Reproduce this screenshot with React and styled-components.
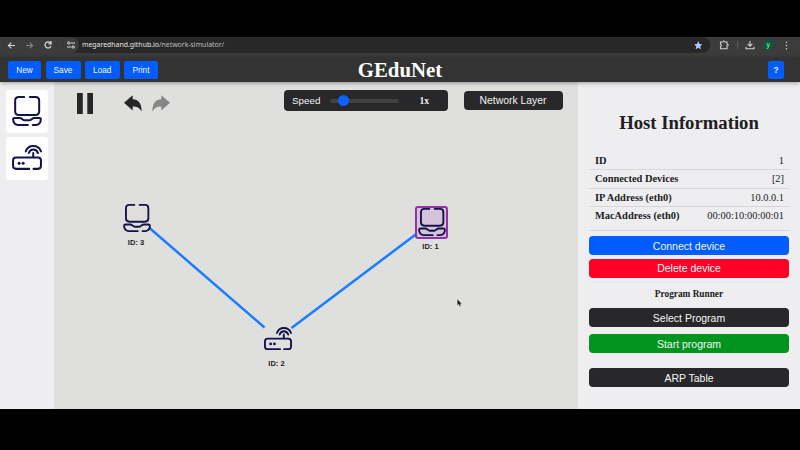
import React from "react";
import styled, { createGlobalStyle } from "styled-components";

const GlobalStyle = createGlobalStyle`
  * { box-sizing: border-box; }
  body { margin: 0; background: #000; }
`;

const Screen = styled.div`
  width: 800px;
  height: 450px;
  padding-top: 37px;
  background: #000;
  overflow: hidden;
  font-family: "Liberation Sans", Arial, sans-serif;
`;

const BrowserBar = styled.div`
  height: 20px;
  background: #3c3c3c;
  display: flex;
  align-items: flex-start;
`;

const NavIcons = styled.div`
  width: 63px;
  height: 16px;
  padding-left: 7px;
  display: flex;
  align-items: center;
  gap: 9px;
`;

const AddressBar = styled.div`
  width: 647px;
  height: 16px;
  background: #282828;
  border-radius: 8px;
  display: flex;
  align-items: center;
  padding-right: 8px;
`;

const SiteBadge = styled.div`
  width: 16px;
  height: 16px;
  border-radius: 50%;
  background: #3c3c3c;
  display: flex;
  align-items: center;
  justify-content: center;
`;

const Url = styled.span`
  flex: 1;
  margin-left: 3px;
  font: 6.92px/16px "Noto Sans", sans-serif;
  color: #bdbdbd;
  b { font-weight: 400; color: #e4e4e4; }
`;

const Extensions = styled.div`
  flex: 1;
  height: 16px;
  display: flex;
  align-items: center;
  padding-left: 9px;
`;

const Divider = styled.i`
  width: 1px;
  height: 8px;
  background: #5c5c5c;
  margin: 0 7px;
`;

const Avatar = styled.div`
  width: 10px;
  height: 10px;
  margin: 0 12px 0 8px;
  border-radius: 50%;
  background: #075c3b;
  color: #d5e6dd;
  font-size: 6.5px;
  line-height: 9px;
  text-align: center;
`;

const Header = styled.header`
  height: 25px;
  background: #333;
  display: grid;
  grid-template-columns: 1fr auto 1fr;
  align-items: center;
  padding: 0 16px 0 8px;
  box-shadow: 0 1px 4px rgba(0, 0, 0, 0.35);
  position: relative;
  z-index: 1;
`;

const Title = styled.h1`
  margin: 0 0 0 8px;
  font: bold 20.8px/24px "Liberation Serif", serif;
  color: #fff;
`;

const Menu = styled.div`
  display: flex;
  gap: 4.5px;
`;

const MenuButton = styled.button`
  width: ${(p) => p.$w}px;
  height: 18px;
  padding: 0;
  border: 0;
  border-radius: 2px;
  background: #005cff;
  color: #f2f6ff;
  font: ${(p) => (p.$bold ? "bold " : "")}8.3px "Liberation Sans", sans-serif;
  justify-self: end;
`;

const Main = styled.main`
  height: 327px;
  display: grid;
  grid-template-columns: 54px 524px 222px;
`;

const Palette = styled.aside`
  background: #eeeef0;
  padding: 8px 6px;
  display: flex;
  flex-direction: column;
  gap: 4px;
`;

const PaletteTile = styled.button`
  width: 42px;
  height: 43px;
  padding: 0 0 2px;
  border: 0;
  border-radius: 3px;
  background: #fff;
  display: flex;
  align-items: center;
  justify-content: center;
`;

const Workspace = styled.section`
  position: relative;
  background: #dfdfde;
`;

const Toolbar = styled.div`
  display: flex;
  align-items: flex-start;
  padding: 8px 0 0 23px;
`;

const History = styled.div`
  display: flex;
  gap: 10px;
  margin: 5px 0 0 31px;
`;

const SpeedBox = styled.div`
  width: 164px;
  height: 21px;
  margin-left: 114px;
  border-radius: 4px;
  background: #28282a;
  color: #f2f2f2;
  display: flex;
  align-items: center;
  padding: 0 19px 0 8px;
  font-size: 9.8px;
`;

const Track = styled.div`
  width: 69px;
  height: 4px;
  margin-left: 10px;
  border-radius: 2px;
  background: #414142;
  display: flex;
  align-items: center;
`;

const Thumb = styled.i`
  width: 11px;
  height: 11px;
  margin-left: 8px;
  border-radius: 50%;
  background: #0a62ff;
`;

const SpeedValue = styled.b`
  margin-left: auto;
  font: bold 9.5px "Liberation Serif", serif;
`;

const LayerButton = styled.button`
  width: 99px;
  height: 19px;
  margin: 1px 0 0 15.5px;
  padding: 0 0 1px;
  border: 0;
  border-radius: 4px;
  background: #28282a;
  color: #f2f2f2;
  font: 10.4px "Liberation Sans", sans-serif;
`;

const Links = styled.svg`
  position: absolute;
  inset: 0;
  pointer-events: none;
`;

const Node = styled.div`
  position: absolute;
  left: ${(p) => p.$x}px;
  top: ${(p) => p.$y}px;
  width: 33px;
  display: flex;
  flex-direction: column;
  align-items: center;
`;

const NodeFrame = styled.div`
  width: 33px;
  height: 33px;
  border-radius: 3px;
  border: 2px solid ${(p) => (p.$selected ? "#9331a8" : "transparent")};
  background: ${(p) => (p.$selected ? "#d5c3d9" : "transparent")};
  display: flex;
  align-items: center;
  justify-content: center;
`;

const NodeLabel = styled.span`
  margin: 3.5px 2px 0 0;
  font: bold 7.5px/9px "Liberation Sans", sans-serif;
  color: #1c1c1c;
  white-space: nowrap;
`;

const Pointer = styled.svg`
  position: absolute;
  left: 403px;
  top: 217px;
`;

const Info = styled.aside`
  background: #eeeef0;
  color: #202022;
  padding: 29px 11px 0;
  display: flex;
  flex-direction: column;
`;

const InfoTitle = styled.h2`
  margin: 0 0 16px;
  font: bold 18.7px/24px "Liberation Serif", serif;
  text-align: center;
`;

const InfoList = styled.div`
  height: 79.5px;
  border-bottom: 1px solid #d8d8da;
`;

const InfoRow = styled.div`
  height: 18.4px;
  padding: 0 5px 0 6px;
  display: flex;
  justify-content: space-between;
  font: 10.4px/19px "Liberation Serif", serif;
  & + & { border-top: 1px solid #d8d8da; line-height: 18px; }
`;

const ActionButton = styled.button`
  width: 200px;
  height: 19px;
  margin-top: ${(p) => p.$gap}px;
  padding: 0;
  border: 0;
  border-radius: 4px;
  background: ${(p) => p.$color};
  color: #f5f5f5;
  font: 10.5px "Liberation Sans", sans-serif;
  flex: none;
`;

const RunnerTitle = styled.h3`
  margin: 4px 0 0;
  padding-top: 5px;
  border-top: 1px solid #e5e5e8;
  font: bold 9.3px/12px "Liberation Serif", serif;
  text-align: center;
`;

const INK = "#14124a";

const ComputerIcon = ({ size }) => (
  <svg width={size} height={size} viewBox="0 0 89 90" fill="none" stroke={INK} strokeWidth="6" strokeLinecap="round" strokeLinejoin="round">
    <path d="M36 3H20Q9 3 9 14V46Q9 57 20 57H70Q81 57 81 46V14Q81 3 70 3H53" />
    <path d="M47 87H17Q3 85 3 70Q3 66 8 66H22C31 66 30 73 38 73H51C59 73 58 66 67 66H81Q86 66 86 70Q86 85 72 87H62" />
  </svg>
);

const RouterIcon = ({ size }) => (
  <svg width={size} height={size * 0.83} viewBox="0 0 89 74" fill="none" stroke={INK} strokeWidth="6" strokeLinecap="round" strokeLinejoin="round">
    <path d="M51 71H12Q3 71 3 62V46Q3 37 12 37H77Q86 37 86 46V62Q86 71 77 71H64M63 36V24" />
    <path d="M41 19C48-2 78-2 86 19M50 24C54 10 72 10 77 24" />
    <circle cx="21" cy="54" r="4.5" fill={INK} stroke="none" />
    <circle cx="33" cy="54" r="4.5" fill={INK} stroke="none" />
  </svg>
);

const BackArrow = ({ color, flip }) => (
  <svg width="18" height="17" viewBox="0 0 54 50">
    <path transform={flip ? "translate(54 0) scale(-1 1)" : undefined} fill={color} d="M0 23L26 0V12C43 12 53 24 53 49C46 37 39 34 26 34V46Z" />
  </svg>
);

const NavArrow = ({ color, flip }) => (
  <svg width="9" height="9" viewBox="0 0 9 9" fill="none" stroke={color} strokeWidth="1.1">
    <path d={flip ? "M1 4.5H7.5M4.7 1.6L7.6 4.5L4.7 7.4" : "M8 4.5H1.5M4.3 1.6L1.4 4.5L4.3 7.4"} />
  </svg>
);

const devices = [
  { id: 3, x: 66.5, y: 119, Icon: ComputerIcon },
  { id: 1, x: 361, y: 123.5, Icon: ComputerIcon, selected: true },
  { id: 2, x: 207, y: 240, Icon: RouterIcon },
];

const details = [
  ["ID", "1"],
  ["Connected Devices", "[2]"],
  ["IP Address (eth0)", "10.0.0.1"],
  ["MacAddress (eth0)", "00:00:10:00:00:01"],
];

export default function App() {
  return (
    <Screen>
      <GlobalStyle />
      <BrowserBar>
        <NavIcons>
          <NavArrow color="#dadada" />
          <NavArrow color="#858585" flip />
          <svg width="10" height="10" viewBox="0 0 10 10" fill="none" stroke="#dadada" strokeWidth="1.2">
            <path d="M8 6A3.1 3.1 0 1 1 7.5 2.9M8.1 1V3.8H5.4" />
          </svg>
        </NavIcons>
        <AddressBar>
          <SiteBadge>
            <svg width="8" height="8" viewBox="0 0 8 8" fill="none" stroke="#dadada">
              <path d="M3.8 2H8M0 6H4.2" />
              <circle cx="1.8" cy="2" r="1.2" />
              <circle cx="6.2" cy="6" r="1.2" />
            </svg>
          </SiteBadge>
          <Url><b>megaredhand.github.io</b>/network-simulator/</Url>
          <svg width="8.5" height="8.5" viewBox="0 0 20 20">
            <path fill="#a8c7fa" d="M10 0L13 7L20 7.6L14.7 12.3L16.3 20L10 15.8L3.7 20L5.3 12.3L0 7.6L7 7Z" />
          </svg>
        </AddressBar>
        <Extensions>
          <svg width="11" height="10" viewBox="0 0 11 10" fill="none" stroke="#cfcfcf" strokeWidth="1.1">
            <path d="M1.5 2H3.7Q4.8 0 6 2H8V4.2Q10.5 5 8 6.3V8.8H1.5V6.5Q3.5 5.3 1.5 4.2Z" />
          </svg>
          <Divider />
          <svg width="10" height="10" viewBox="0 0 10 10" fill="none" stroke="#cfcfcf" strokeWidth="1.1">
            <path d="M5 1V6M2.7 3.8L5 6.1L7.3 3.8M1 6.8V8.7H9V6.8" />
          </svg>
          <Avatar>y</Avatar>
          <svg width="3" height="9" viewBox="0 0 3 9" fill="#cfcfcf">
            <circle cx="1.5" cy="1.2" r=".8" />
            <circle cx="1.5" cy="4.5" r=".8" />
            <circle cx="1.5" cy="7.8" r=".8" />
          </svg>
        </Extensions>
      </BrowserBar>
      <Header>
        <Menu>
          <MenuButton $w={33}>New</MenuButton>
          <MenuButton $w={35}>Save</MenuButton>
          <MenuButton $w={34.5}>Load</MenuButton>
          <MenuButton $w={34}>Print</MenuButton>
        </Menu>
        <Title>GEduNet</Title>
        <MenuButton $w={16} $bold>?</MenuButton>
      </Header>
      <Main>
        <Palette>
          <PaletteTile><ComputerIcon size={30} /></PaletteTile>
          <PaletteTile><RouterIcon size={30} /></PaletteTile>
        </Palette>
        <Workspace>
          <Toolbar>
            <svg width="16" height="26" viewBox="0 0 16 26" fill="#262626">
              <path d="M0 3H5.8V24H0ZM10.3 3H16V24H10.3Z" />
            </svg>
            <History>
              <BackArrow color="#262626" />
              <BackArrow color="#868686" flip />
            </History>
            <SpeedBox>
              Speed
              <Track><Thumb /></Track>
              <SpeedValue>1x</SpeedValue>
            </SpeedBox>
            <LayerButton>Network Layer</LayerButton>
          </Toolbar>
          <Links width="524" height="327" viewBox="0 0 524 327" stroke="#1a7dff" strokeWidth="2.5">
            <path d="M95.5 146L210.5 245.5M237.5 246L365 150" />
          </Links>
          {devices.map(({ id, x, y, Icon, selected }) => (
            <Node key={id} $x={x} $y={y}>
              <NodeFrame $selected={selected}><Icon size={28} /></NodeFrame>
              <NodeLabel>ID: {id}</NodeLabel>
            </Node>
          ))}
          <Pointer width="5" height="8" viewBox="0 0 5 8">
            <path d="M.5 .5V6L1.8 5L2.8 7.2L3.7 6.8L2.8 4.7H4.5Z" fill="#151515" stroke="#777" strokeWidth=".3" />
          </Pointer>
        </Workspace>
        <Info>
          <InfoTitle>Host Information</InfoTitle>
          <InfoList>
            {details.map(([name, value]) => (
              <InfoRow key={name}><b>{name}</b><span>{value}</span></InfoRow>
            ))}
          </InfoList>
          <ActionButton $gap={5.5} $color="#005cff">Connect device</ActionButton>
          <ActionButton $gap={3.5} $color="#ff0026">Delete device</ActionButton>
          <RunnerTitle>Program Runner</RunnerTitle>
          <ActionButton $gap={8.5} $color="#28282a">Select Program</ActionButton>
          <ActionButton $gap={7} $color="#00941f">Start program</ActionButton>
          <ActionButton $gap={15} $color="#28282a">ARP Table</ActionButton>
        </Info>
      </Main>
    </Screen>
  );
}
